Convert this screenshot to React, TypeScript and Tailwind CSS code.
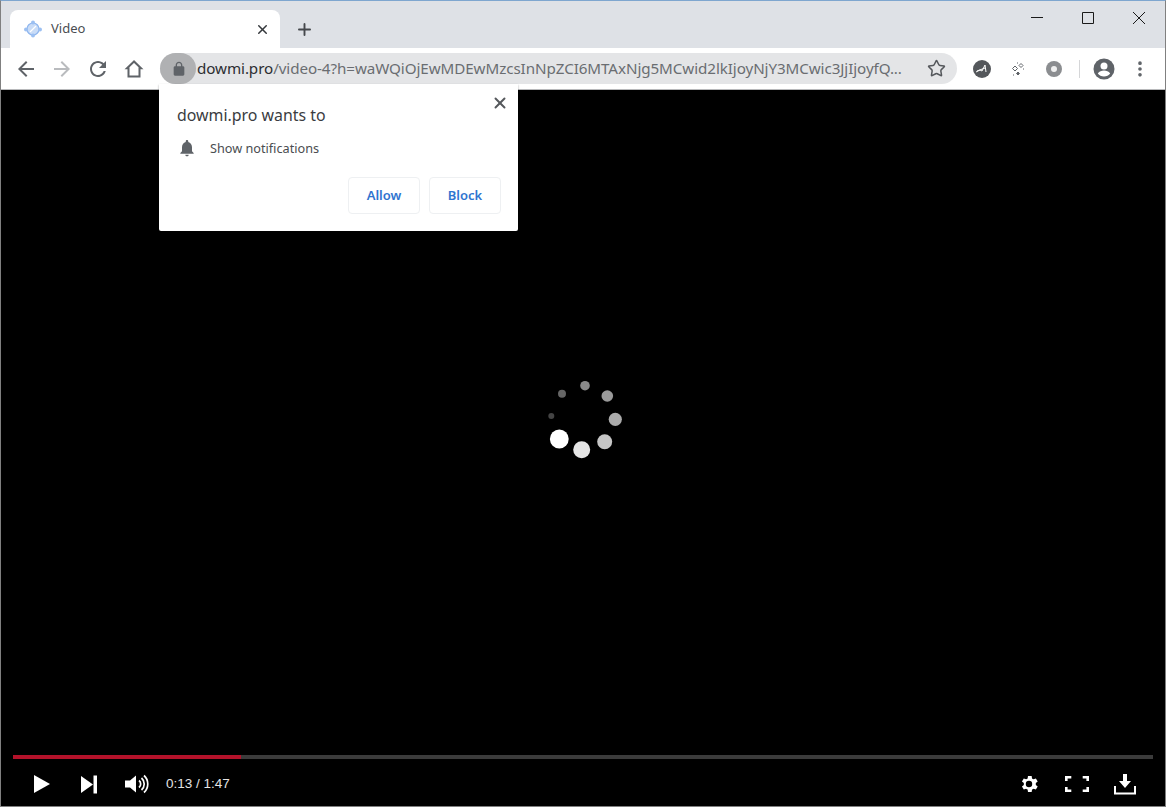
import { Star, X, Plus, MoreVertical } from "lucide-react";

const dots = [
  { x: 55, y: 15.7, r: 4.8, fill: "#8a8a8a" },
  { x: 77.3, y: 26, r: 5.8, fill: "#9a9a9a" },
  { x: 85.3, y: 49.3, r: 6.6, fill: "#ababab" },
  { x: 74.7, y: 71.7, r: 7.5, fill: "#c6c6c6" },
  { x: 51.7, y: 79.7, r: 8.5, fill: "#e6e6e6" },
  { x: 29.3, y: 69, r: 9.4, fill: "#ffffff" },
  { x: 21.3, y: 46, r: 3, fill: "#444444" },
  { x: 32, y: 23.7, r: 4, fill: "#666666" },
];

function TabBar() {
  return (
    <div className="flex h-[47px] shrink-0 items-end bg-[#dee1e6] pl-[9px]">
      <div className="flex h-[38px] w-[270px] items-center rounded-t-[8px] bg-white pl-[13px] pr-[10px]">
        <svg width="20" height="20" viewBox="0 0 20 20" fill="none">
          <circle cx="10" cy="10" r="6" fill="#c9dcf7" stroke="#8fb6ee" strokeWidth="1.2" />
          <circle cx="10" cy="3.5" r="2" fill="#9cc0f2" />
          <circle cx="3" cy="10.5" r="2" fill="#9cc0f2" />
          <circle cx="17" cy="10.5" r="2" fill="#9cc0f2" />
          <circle cx="10" cy="16.5" r="2" fill="#9cc0f2" />
          <path d="M7 13l6-6" stroke="#ffffff" strokeWidth="1.2" />
        </svg>
        <span className="ml-[8px] flex-1 text-[13px] text-[#4a4d51]">Video</span>
        <X size={15} strokeWidth={2.4} className="text-[#35383c]" />
      </div>
      <div className="ml-[15px] flex h-[38px] items-center">
        <Plus size={19} strokeWidth={2.4} className="text-[#45484c]" />
      </div>
      <div className="ml-auto flex h-full items-start pt-[9px]">
        <div className="flex w-[51px] justify-center">
          <svg width="16" height="16" viewBox="0 0 16 16" stroke="#1a1a1a" strokeWidth="1"><path d="M2 7.500h12" /></svg>
        </div>
        <div className="flex w-[51px] justify-center">
          <svg width="16" height="16" viewBox="0 0 16 16" fill="none" stroke="#1a1a1a" strokeWidth="1"><path d="M2.500 2.500h11v11h-11z" /></svg>
        </div>
        <div className="flex w-[52px] justify-center">
          <svg width="16" height="16" viewBox="0 0 16 16" stroke="#1a1a1a" strokeWidth="1"><path d="M2 2l12 12M14 2l-12 12" /></svg>
        </div>
      </div>
    </div>
  );
}

function Toolbar() {
  return (
    <div className="flex h-[42px] shrink-0 items-center border-b border-[#b8b9bb] bg-white pl-[13px]">
      <svg width="24" height="24" viewBox="0 0 24 24" fill="#5f6368">
        <path d="M20 11H7.830l5.590-5.590L12 4l-8 8 8 8 1.410-1.410L7.830 13H20v-2z" />
      </svg>
      <svg width="24" height="24" viewBox="0 0 24 24" fill="#b9bbbe" className="ml-[12px]">
        <path d="M4 11h12.170l-5.590-5.590L12 4l8 8-8 8-1.410-1.410L16.170 13H4v-2z" />
      </svg>
      <svg width="24" height="24" viewBox="0 0 24 24" fill="#5f6368" className="ml-[12px]">
        <path d="M17.650 6.350C16.200 4.900 14.210 4 12 4c-4.420 0-7.990 3.580-7.990 8s3.570 8 7.990 8c3.730 0 6.840-2.550 7.730-6h-2.080c-.82 2.330-3.040 4-5.650 4-3.310 0-6-2.690-6-6s2.690-6 6-6c1.660 0 3.140.69 4.220 1.780L13 11h7V4l-2.350 2.350z" />
      </svg>
      <svg width="24" height="24" viewBox="0 0 24 24" fill="none" stroke="#5f6368" strokeWidth="2" className="ml-[12px]">
        <path d="M12 4.500L5 11.200h1.500V19.500h11V11.200H19z" />
      </svg>
      <div className="ml-[14px] flex h-[31px] w-[797px] items-center rounded-full bg-[#e4e5e7]">
        <div className="flex h-[31px] w-[36px] shrink-0 items-center justify-center rounded-full bg-[#b0b1b3] pl-[2px]">
          <svg width="16" height="16" viewBox="0 0 24 24" fill="#5f6368">
            <path d="M18 8h-1V6c0-2.760-2.240-5-5-5S7 3.240 7 6v2H6c-1.100 0-2 .9-2 2v10c0 1.100.9 2 2 2h12c1.100 0 2-.9 2-2V10c0-1.100-.9-2-2-2zM9 6c0-1.660 1.340-3 3-3s3 1.340 3 3v2H9V6z" />
          </svg>
        </div>
        <div className="ml-[1px] min-w-0 flex-1 whitespace-nowrap text-[15.2px] tracking-[-0.08px] text-[#6a6d71]">
          <span className="text-[#2c2e31]">dowmi.pro</span>/video-4?h=waWQiOjEwMDEwMzcsInNpZCI6MTAxNjg5MCwid2lkIjoyNjY3MCwic3JjIjoyfQ...
        </div>
        <Star size={19} strokeWidth={1.9} className="mr-[11px] shrink-0 text-[#55585c]" />
      </div>
      <div className="ml-[16px] flex h-[18px] w-[18px] items-center justify-center rounded-full bg-[#54575b]">
        <svg width="14" height="14" viewBox="0 0 14 14" fill="none" stroke="#ffffff" strokeWidth="1">
          <path d="M1 10l4-2 2 1 3-6 1 7M2 9l8-3" />
        </svg>
      </div>
      <svg width="18" height="18" viewBox="0 0 18 18" className="ml-[18px]" fill="none" stroke="#5f6368">
        <path d="M6 6l2.500 2.500-2.500 2.500-2.500-2.500zM12 3.500l2 2-2 2-2-2z" strokeWidth="1" />
        <path d="M9 12l1.500 1.500-1.500 1.500-1.500-1.500z" fill="#5f6368" strokeWidth="1" />
        <path d="M4 15h1M14 9h1M8 3h1" strokeWidth="1" />
      </svg>
      <div className="ml-[19px] flex h-[16px] w-[16px] items-center justify-center rounded-full bg-[#8b8d90]">
        <div className="h-[6px] w-[6px] rounded-full bg-[#f0f0f0]" />
      </div>
      <div className="ml-[17px] h-[18px] w-px bg-[#d5d6d8]" />
      <svg width="22" height="22" viewBox="0 0 22 22" className="ml-[13px]">
        <circle cx="11" cy="11" r="10.500" fill="#5f6368" />
        <circle cx="11" cy="8" r="3.500" fill="#ffffff" />
        <path d="M4.800 15.500c1.500-2.300 3.800-3 6.200-3s4.700.7 6.200 3c-1.400 1.900-3.700 3-6.200 3s-4.800-1.100-6.200-3z" fill="#ffffff" />
      </svg>
      <MoreVertical size={20} strokeWidth={2.4} className="ml-[15px] text-[#5f6368]" />
    </div>
  );
}

function PermissionPopup() {
  return (
    <div className="absolute left-[158px] top-[83px] flex h-[147px] w-[359px] flex-col rounded-b-[2px] bg-white shadow-[0_1px_2px_rgba(0,0,0,0.4)]">
      <div className="flex items-start justify-between pl-[18px] pr-[9px] pt-[10px]">
        <span className="mt-[10px] text-[15.9px] leading-[22px] text-[#3a3c3f]">dowmi.pro wants to</span>
        <X size={18} strokeWidth={2.6} className="text-[#55585c]" />
      </div>
      <div className="mt-[12px] flex items-center pl-[18px]">
        <svg width="20" height="20" viewBox="0 0 24 24" fill="#5f6368">
          <path d="M12 22c1.100 0 2-.9 2-2h-4c0 1.100.89 2 2 2zm6-6v-5c0-3.070-1.640-5.640-4.500-6.320V4c0-.83-.67-1.500-1.500-1.500s-1.500.67-1.500 1.500v.68C7.630 5.360 6 7.920 6 11v5l-2 2v1h16v-1l-2-2z" />
        </svg>
        <span className="ml-[13px] text-[12.7px] leading-[18px] text-[#4a4d51]">Show notifications</span>
      </div>
      <div className="mt-[19px] flex justify-end gap-[9px] pr-[17px]">
        <button className="h-[37px] w-[72px] rounded-[4px] border border-[#eef0f2] text-[13px] font-semibold text-[#2f74d0]">Allow</button>
        <button className="h-[37px] w-[72px] rounded-[4px] border border-[#eef0f2] text-[13px] font-semibold text-[#2f74d0]">Block</button>
      </div>
    </div>
  );
}

function PlayerControls() {
  return (
    <div className="shrink-0 px-[12px] pb-[3px]">
      <div className="flex h-[4px] bg-[#3b3b3b]">
        <div className="h-full w-[228px] bg-[#b3122a]" />
      </div>
      <div className="mt-[6px] flex h-[38px] items-center text-white">
        <svg width="18" height="20" viewBox="0 0 18 20" className="ml-[20px]" fill="#ffffff"><path d="M1 1l16 9-16 9z" /></svg>
        <svg width="18" height="19" viewBox="0 0 18 19" className="ml-[29px]" fill="#ffffff">
          <path d="M1 1l12 8.500-12 8.500z" />
          <rect x="13.500" y="0.500" width="3.500" height="18" />
        </svg>
        <svg width="24" height="20" viewBox="0 0 24 20" className="ml-[27px]" fill="#ffffff">
          <path d="M0 6.500h5l6-5v17l-6-5h-5z" />
          <path d="M14 6.500a4.500 4.500 0 0 1 0 7M16.500 4a8 8 0 0 1 0 12M19 1.500a11.500 11.500 0 0 1 0 17" fill="none" stroke="#ffffff" strokeWidth="1.700" />
        </svg>
        <span className="ml-[17px] font-['Liberation_Sans',sans-serif] text-[13.5px] text-[#e4e4e4]">0:13 / 1:47</span>
        <svg width="22" height="22" viewBox="0 0 24 24" className="ml-auto" fill="#ffffff">
          <path fillRule="evenodd" d="M19.400 13a7.500 7.500 0 0 0 0-2l2.100-1.600-2-3.500-2.500 1a7.500 7.500 0 0 0-1.700-1l-.4-2.700h-4l-.4 2.700a7.500 7.500 0 0 0-1.700 1l-2.500-1-2 3.500 2.100 1.600a7.500 7.500 0 0 0 0 2l-2.100 1.600 2 3.500 2.500-1a7.500 7.500 0 0 0 1.700 1l.4 2.700h4l.4-2.700a7.500 7.500 0 0 0 1.700-1l2.500 1 2-3.500zM12 15.500a3.500 3.500 0 1 1 0-7 3.500 3.500 0 0 1 0 7z" />
        </svg>
        <svg width="24" height="16" viewBox="0 0 24 16" className="ml-[25px]" fill="none" stroke="#ffffff" strokeWidth="2.600">
          <path d="M1.300 5v-3.700h5M17.700 1.300h5v3.700M22.700 11v3.700h-5M6.300 14.700h-5v-3.700" />
        </svg>
        <svg width="22" height="21" viewBox="0 0 22 21" className="ml-[25px] mr-[17px]" fill="#ffffff">
          <path d="M9 0h4v7h4l-6 7-6-7h4z" />
          <path d="M1 12v7.500h20v-7.500" fill="none" stroke="#ffffff" strokeWidth="2" />
        </svg>
      </div>
    </div>
  );
}

export default function App() {
  return (
    <div className="relative flex h-[807px] w-[1166px] flex-col overflow-hidden border-x border-b border-t border-x-[#808080] border-b-[#808080] border-t-[#7ea6cf] font-['Noto_Sans',sans-serif]">
      <TabBar />
      <Toolbar />
      <div className="relative flex min-h-0 flex-1 flex-col bg-black">
        <div className="flex flex-1 justify-center pt-[280px]">
          <svg width="110" height="100" viewBox="0 0 110 100" className="ml-[3px]">
            {dots.map((d) => (
              <circle key={d.x} cx={d.x} cy={d.y} r={d.r} fill={d.fill} />
            ))}
          </svg>
        </div>
        <PlayerControls />
      </div>
      <PermissionPopup />
    </div>
  );
}
